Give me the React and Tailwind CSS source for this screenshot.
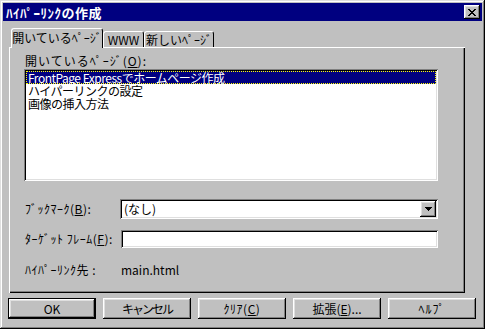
import React from "react";

const raised =
  "shadow-[inset_-1px_-1px_#000,inset_1px_1px_#fff,inset_-2px_-2px_#808080,inset_2px_2px_#dfdfdf]";
const sunken =
  "shadow-[inset_1px_1px_#808080,inset_-1px_-1px_#fff,inset_2px_2px_#000,inset_-2px_-2px_#dfdfdf]";

function U({ children }) {
  return <span className="underline underline-offset-[1px]">{children}</span>;
}

function Button({ children, isDefault, className = "" }) {
  return (
    <button
      className={`w-[88px] h-[21px] bg-[#c0c0c0] flex items-center justify-center text-[12px] leading-[12px] text-black ${
        isDefault ? "border border-black" : ""
      }`}
    >
      <span className={`w-full h-full flex items-center justify-center whitespace-nowrap ${raised} ${className}`}>{children}</span>
    </button>
  );
}

export default function App() {
  const items = [
    "FrontPage Expressでホームページ作成",
    "ハイパーリンクの設定",
    "画像の挿入方法",
  ];

  return (
    <div className="w-[485px] h-[329px] bg-[#c0c0c0] font-['Noto_Sans_CJK_JP',sans-serif] text-black text-[12px] leading-[12px] p-[3px] flex flex-col shadow-[inset_-1px_-1px_#000,inset_1px_1px_#dfdfdf,inset_-2px_-2px_#808080,inset_2px_2px_#fff]">
      {/* TITLE BAR */}
      <div className="h-[18px] bg-[#000080] flex items-center justify-between pl-[3px] pr-[2px]">
        <span className="text-white font-bold text-[13px] leading-[13px] tracking-[0.5px]">ﾊｲﾊﾟｰﾘﾝｸの作成</span>
        <div className={`w-[16px] h-[14px] bg-[#c0c0c0] flex items-center justify-center ${raised}`}>
          <svg width="8" height="7" viewBox="0 0 8 7">
            <path d="M0 0h2v1h1v1h2v-1h1v-1h2v1h-1v1h-1v1h-1v1h1v1h1v1h1v1h-2v-1h-1v-1h-2v1h-1v1h-2v-1h1v-1h1v-1h1v-1h-1v-1h-1v-1h-1z" fill="#000" />
          </svg>
        </div>
      </div>

      {/* BODY */}
      <div className="flex flex-col px-[5px] mt-[7px]">
        {/* TABS */}
        <div className="flex items-end h-[20px] ml-[3px] relative z-10 whitespace-nowrap">
          <div className="w-[92px] h-[20px] bg-[#c0c0c0] border-l border-t border-white border-r border-r-black rounded-t-[3px] flex items-center justify-center pb-[1px]">
            開いているﾍﾟｰｼﾞ
          </div>
          <div className="w-[41px] h-[16px] mb-[1px] bg-[#c0c0c0] border-l border-t border-white border-r border-r-black rounded-t-[3px] flex items-center justify-center">
            WWW
          </div>
          <div className="w-[70px] h-[16px] mb-[1px] bg-[#c0c0c0] border-l border-t border-white border-r border-r-black rounded-t-[3px] flex items-center justify-center">
            新しいﾍﾟｰｼﾞ
          </div>
        </div>

        {/* PANEL */}
        <div className="ml-px w-[456px] h-[246px] mt-[-1px] pt-[8px] pl-[15px] flex flex-col shadow-[inset_1px_1px_#fff,inset_-1px_-1px_#000,inset_-2px_-2px_#808080]">
          <div className="h-[12px] pl-px tracking-[1px] whitespace-nowrap">
            開いているﾍﾟｰｼﾞ(<U>O</U>):
          </div>
          <div className={`mt-[2px] w-[414px] h-[112px] bg-white p-[2px] flex flex-col ${sunken}`}>
            {items.map((t, i) => (
              <div
                key={i}
                className={`h-[13px] leading-[11px] pl-[2px] flex items-center whitespace-nowrap tracking-[-0.5px] ${
                  i === 0 ? "bg-[#000080] text-white border border-dotted border-[#ffff00] pl-px" : ""
                }`}
              >
                {t}
              </div>
            ))}
          </div>

          <div className="flex items-center mt-[18px] whitespace-nowrap">
            <span className="w-[96px] pl-px tracking-[0.5px]">ﾌﾞｯｸﾏｰｸ(<U>B</U>):</span>
            <div className={`w-[318px] h-[20px] bg-white flex items-center justify-between p-[2px] ${sunken}`}>
              <span className="pl-[2px]">(なし)</span>
              <div className={`w-[16px] h-[16px] bg-[#c0c0c0] flex items-center justify-center ${raised}`}>
                <svg width="7" height="4" viewBox="0 0 7 4">
                  <path d="M0 0h7v1h-1v1h-1v1h-1v1h-1v-1h-1v-1h-1v-1h-1z" fill="#000" />
                </svg>
              </div>
            </div>
          </div>

          <div className="flex items-center mt-[11px] whitespace-nowrap">
            <span className="w-[97px] pl-px tracking-[0.5px]">ﾀｰｹﾞｯﾄ ﾌﾚｰﾑ(<U>F</U>):</span>
            <div className={`w-[317px] h-[18px] bg-white ${sunken}`} />
          </div>

          <div className="flex items-center mt-[16px] h-[12px] whitespace-nowrap">
            <span className="w-[97px] pl-px tracking-[0.5px]">ﾊｲﾊﾟｰﾘﾝｸ先 :</span>
            <span>main.html</span>
          </div>
        </div>

        {/* BUTTONS */}
        <div className="flex gap-[7px] mt-[5px]">
          <Button isDefault>OK</Button>
          <Button className="tracking-[-2px]">キャンセル</Button>
          <Button className="tracking-[0.5px]">ｸﾘｱ(<U>C</U>)</Button>
          <Button>拡張(<U>E</U>)...</Button>
          <Button className="tracking-[1px]">ﾍﾙﾌﾟ</Button>
        </div>
      </div>
    </div>
  );
}
